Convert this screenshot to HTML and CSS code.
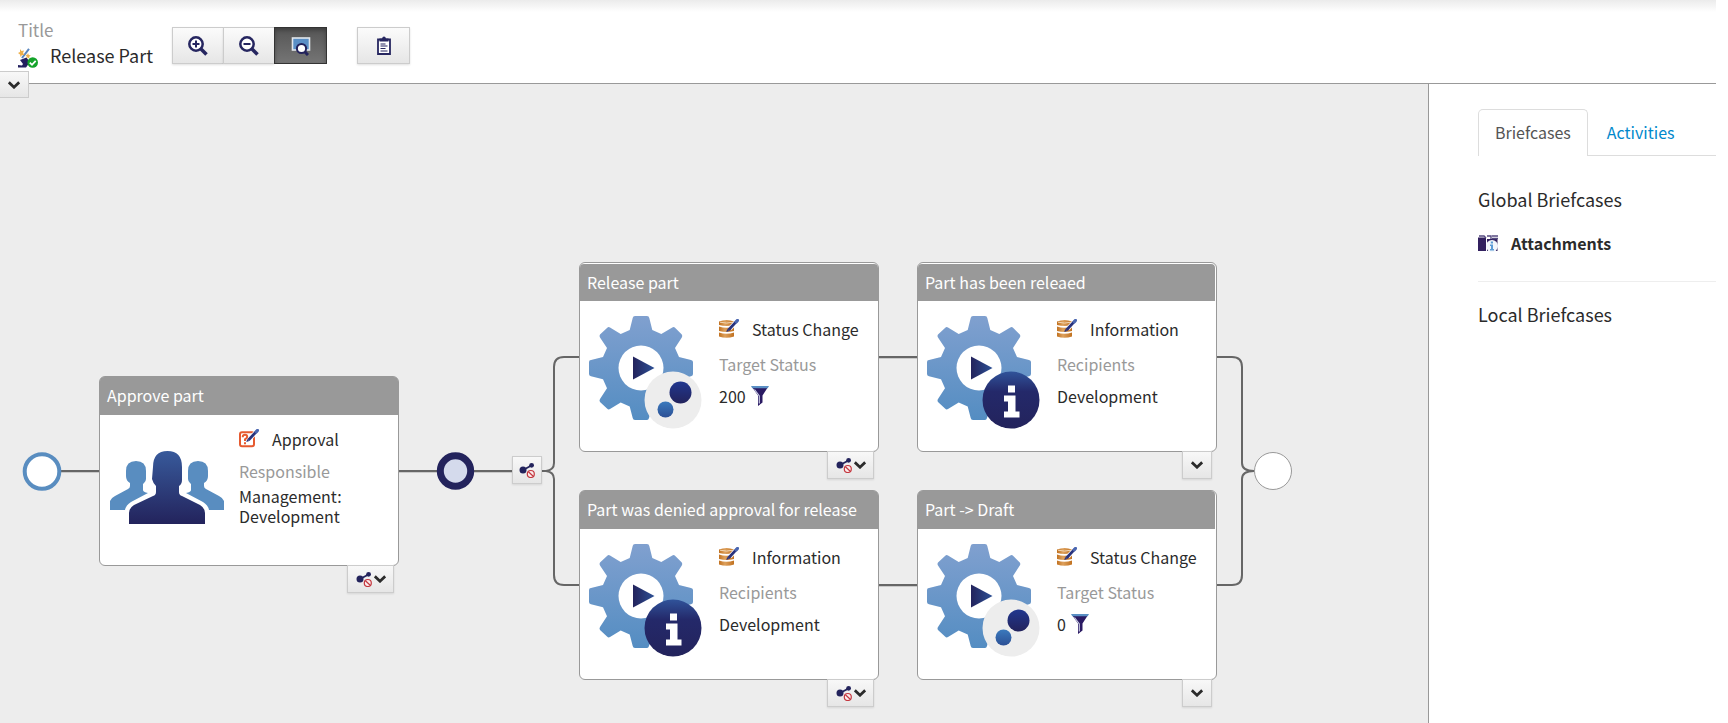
FILE: index.html
```html
<!DOCTYPE html>
<html lang="en">
<head>
<meta charset="utf-8">
<title>Release Part</title>
<link rel="stylesheet" href="styles.css">
</head>
<body>
<svg class="defs" aria-hidden="true">
  <defs>
    <linearGradient id="gear-fill" x1="0" y1="0" x2="0" y2="1"><stop offset="0" stop-color="#80a0cf"/><stop offset="1" stop-color="#548dc2"/></linearGradient>
    <linearGradient id="play-fill" x1="0" y1="0" x2="1" y2="0"><stop offset="0" stop-color="#23235c"/><stop offset="1" stop-color="#2c5095"/></linearGradient>
    <linearGradient id="navy-fill" x1="0" y1="0" x2="0" y2="1"><stop offset="0" stop-color="#30539a"/><stop offset=".35" stop-color="#24296a"/><stop offset="1" stop-color="#23235c"/></linearGradient>
    <linearGradient id="person-fill" x1="0" y1="0" x2="0" y2="1"><stop offset="0" stop-color="#385a9b"/><stop offset="1" stop-color="#23235c"/></linearGradient>
    <linearGradient id="dot-fill" x1="0" y1="0" x2="0" y2="1"><stop offset="0" stop-color="#21378f"/><stop offset="1" stop-color="#23235c"/></linearGradient>
    <linearGradient id="small-dot-fill" x1="0" y1="0" x2="0" y2="1"><stop offset="0" stop-color="#3b7abd"/><stop offset="1" stop-color="#2c5095"/></linearGradient>
    <linearGradient id="coin-fill" x1="0" y1="0" x2="1" y2="0"><stop offset="0" stop-color="#c1711f"/><stop offset=".4" stop-color="#dda05c"/><stop offset="1" stop-color="#c1711f"/></linearGradient>
    <symbol id="chevron" viewBox="0 0 12 8"><path d="M.8 1.300 6 6.200l5.200-4.900" fill="none" stroke="#2b2b2b" stroke-width="2.800"/></symbol>
    <symbol id="share" viewBox="0 0 16 16"><path d="M4 8 12.500 3.500" stroke="#23235c" stroke-width="1.800"/><circle cx="4" cy="8" r="3.500" fill="#23235c"/><circle cx="12.600" cy="3.300" r="2.400" fill="#23235c"/><circle cx="11.800" cy="12" r="3.500" fill="#fbecec" stroke="#c4373f" stroke-width="1.200"/><path d="m9.400 9.800 4.800 4.400" stroke="#c4373f" stroke-width="1.200"/></symbol>
    <symbol id="gear" viewBox="0 0 104 104"><path fill="url(#gear-fill)" d="M46 0h12q2 0 2.300 2l3 12 9 4 11-6.500q1.500-1 3 .5l6.500 6.500q1 1.500 0 3L86 32l4 9 12 3q2 .500 2 2v12q0 2-2 2.300l-12 3-4 9 7 10.700q1 1.500 0 3L86 92.500q-1.500 1.500-3 .5l-11-6.500-9 4-3 11.500q-.5 2-2 2H46q-2 0-2.300-2l-3-11.500-9-4L21 93q-1.500 1-3-.5L11 86q-1-1.500 0-3l7-10.700-4-9-12-3Q0 60 0 58V46q0-2 2-2l12-3 4-9-7-10.500q-1-1.500 0-3l7-6.500q1.500-1.500 3-.5L31.700 18l9-4 3-12Q44 0 46 0Z"/><circle cx="52" cy="52" r="22.500" fill="#fff"/><path fill="url(#play-fill)" d="M44 40.500 65.500 52 44 63.500Z"/></symbol>
    <symbol id="gear-status" viewBox="0 0 114 114"><use href="#gear" width="104" height="104"/><circle cx="84" cy="84" r="28.500" fill="#ededed"/><circle cx="91.500" cy="76.500" r="11" fill="url(#dot-fill)"/><circle cx="76.500" cy="93.500" r="8" fill="url(#small-dot-fill)"/></symbol>
    <symbol id="gear-info" viewBox="0 0 114 114"><use href="#gear" width="104" height="104"/><circle cx="84" cy="84" r="28.500" fill="url(#navy-fill)"/><path fill="#fff" d="M81 69.500h7v7h-7zM77 79.500h11.500V95.500h4v6H77v-6h4V85.500h-4z"/></symbol>
    <symbol id="database-edit" viewBox="0 0 20 20"><path fill="url(#coin-fill)" d="M0 2.500Q7.500-.5 15 2.500V6Q7.500 8 0 6Z"/><path fill="url(#coin-fill)" d="M0 7.500Q7.500 10 15 7.500V12Q7.500 14 0 12ZM0 13.500Q7.500 16 15 13.500V17.500Q7.500 20 0 17.500Z"/><path d="M1 3.200Q7.500 5 14 3.200" fill="none" stroke="#f2d7b4" stroke-width="1"/><path d="m11 9.500 7.500-8" stroke="#fff" stroke-width="4.400"/><path d="m9.500 11 8-8.600" stroke="#28327c" stroke-width="2.800"/><path d="m17.200 2.800 1.300-1.400" stroke="#4a66b0" stroke-width="3.200" stroke-linecap="round"/><path fill="#28327c" d="m7.300 13 1-3 2 2z"/></symbol>
    <symbol id="question-edit" viewBox="0 0 20 20"><rect x="1" y="3.200" width="14" height="14" rx="2" fill="#fff" stroke="#e65a30" stroke-width="2"/><path d="M3.800 8.200V7.500Q4 5.800 6 5.800q2.200 0 2.200 1.900 0 1.200-2.200 2.600v1.800M5 14.200h2" fill="none" stroke="#e65a30" stroke-width="2"/><path d="m11 9.500 7.500-8" stroke="#fff" stroke-width="4.400"/><path d="m9.500 11 8-8.600" stroke="#28327c" stroke-width="2.800"/><path d="m17.200 2.800 1.300-1.400" stroke="#4a66b0" stroke-width="3.200" stroke-linecap="round"/><path fill="#28327c" d="m7.300 13 1-3 2 2z"/></symbol>
    <symbol id="funnel" viewBox="0 0 18 20"><path fill="#2a1a63" d="M1 1h16l-5.500 8.500v7L7 20V9.500Z"/><path d="M3.500 3.500 8.300 10v7.500" fill="none" stroke="#c9cbe3" stroke-width="1.200"/><path fill="#5a8fc4" d="M0 0h18l-1.300 2.200H1.300Z"/></symbol>
    <symbol id="people" viewBox="0 0 114 74"><path id="side-person" fill="#598dc0" d="M16 20Q16 10 26 10T36 20V28Q36 30 34 32L33 33V39Q33 41 38 42L21 51Q16 54 15 59H0V50Q1 47 5 45L18 38Q20 37 20 35V32Q16 30 16 25Z"/><use href="#side-person" transform="matrix(-1 0 0 1 114 0)"/><path fill="url(#person-fill)" d="M43 16Q43 0 57.500 0T72 16V29Q72 33 69 35V41Q69 44 72 45L90 54Q95 57 95 62V73H19V62Q19 57 24 54L43 45Q46 44 46 41V35Q43 32 42 28Z"/></symbol>
  </defs>
</svg>

<div class="app">
  <header class="topbar">
    <div class="title">
      <span class="title-label">Title</span>
      <div class="title-row">
        <svg class="icon20" viewBox="0 0 20 20" aria-hidden="true"><path d="M4 10 11 .8" stroke="#5a86bd" stroke-width="2"/><path fill="#23205f" d="M2 12 8.500 9.500 11 13l-.5 3L8 19.500H0V17l4 .5 1-1.500Z"/><path d="m2 1 1.500 2L6 2.500 5 5l1.500 2L4 7 2.500 9 2 6.500 0 5l2-1Zm8 4 .8 2 2 .5-1.600 1.200.3 2L9.700 9.500l-1.500.5.5-1.800L7.500 7l1.800-.2Z" fill="#eeb04a"/><circle cx="14.700" cy="14.500" r="5.300" fill="#14a32a"/><path d="m11.800 14.600 2.200 2.200 3.700-4" fill="none" stroke="#fff" stroke-width="1.800"/></svg>
        <h1>Release Part</h1>
      </div>
    </div>
    <div class="toolbar">
      <div class="group">
        <button type="button" class="tool" aria-label="Zoom in"><svg viewBox="0 0 20 20" width="20" height="20"><circle cx="8" cy="8" r="6.700" fill="#fff" stroke="#262660" stroke-width="2.500"/><path d="M4.500 8h7M8 4.500v7" stroke="#262660" stroke-width="2"/><path d="m13 13 5.500 5.500" stroke="#262660" stroke-width="3.500"/></svg></button>
        <button type="button" class="tool" aria-label="Zoom out"><svg viewBox="0 0 20 20" width="20" height="20"><circle cx="8" cy="8" r="6.700" fill="#fff" stroke="#262660" stroke-width="2.500"/><path d="M4.500 8h7" stroke="#262660" stroke-width="2"/><path d="m13 13 5.500 5.500" stroke="#262660" stroke-width="3.500"/></svg></button>
        <button type="button" class="tool active" aria-label="Zoom to fit" aria-pressed="true"><svg viewBox="0 0 20 20" width="20" height="20"><rect x="1.500" y="2" width="17" height="12" fill="#5a8fc6" stroke="#e1e6ec" stroke-width="1.600"/><path d="m13 15 4 4" stroke="#23235c" stroke-width="3"/><circle cx="10.500" cy="12.500" r="4.600" fill="#fff" stroke="#23235c" stroke-width="2"/></svg></button>
      </div>
      <button type="button" class="tool single" aria-label="Clipboard"><svg viewBox="0 0 20 20" width="20" height="20"><path d="M4 3.500h12v14.500H4z" fill="#fff" stroke="#262660" stroke-width="1.800"/><path d="M5.500 2.500h2.500Q8.500.5 10 .5t2 2h2.500V5.500H5.500Z" fill="#262660"/><path d="M6.500 8h5M6.500 10h7M6.500 12.500h5M6.500 15h7" stroke="#262660" stroke-width="1.200"/></svg></button>
    </div>
  </header>

  <div class="workspace">
    <button type="button" class="collapse" aria-label="Expand details"><svg width="12" height="8"><use href="#chevron"/></svg></button>
    <main class="canvas">
      <svg class="links" width="1430" height="638" aria-hidden="true">
        <g fill="none" stroke="#c9c9c9" stroke-width="1"><path d="M61 388.500h38M399 388.500h113M879 274.500h38M879 502.500h38"/></g>
        <g fill="none" stroke="#666" stroke-width="2"><path d="M61 387h38M399 387h113M879 273h38M879 501h38"/>
        <path d="M542 387h4q8-1 8-8V283q0-10 10-10h15M546 387q8 1 8 8v96q0 10 10 10h15M1217 273h15q10 0 10 10v96q0 8 12 8M1217 501h15q10 0 10-10v-96q0-8 12-8"/></g>
        <circle cx="42" cy="387.500" r="17.300" fill="#fff" stroke="#598dc0" stroke-width="4"/>
        <circle cx="455.500" cy="387" r="15.200" fill="#d4daec" stroke="#23235c" stroke-width="7"/>
        <circle cx="1273" cy="387" r="18.500" fill="#fff" stroke="#999"/>
      </svg>

      <button type="button" class="menu branch" aria-label="Branch options"><svg width="16" height="16"><use href="#share"/></svg></button>

      <article class="task approve">
        <h2>Approve part</h2>
        <div class="task-body">
          <svg class="art" width="114" height="74"><use href="#people"/></svg>
          <div class="info">
            <div class="kind"><svg class="icon20"><use href="#question-edit"/></svg><span>Approval</span></div>
            <span class="label">Responsible</span>
            <p>Management: Development</p>
          </div>
        </div>
        <button type="button" class="menu" aria-label="Approve part options"><svg width="16" height="16"><use href="#share"/></svg><svg width="12" height="8"><use href="#chevron"/></svg></button>
      </article>

      <article class="task col1 row1">
        <h2>Release part</h2>
        <div class="task-body">
          <svg class="art" width="114" height="114"><use href="#gear-status"/></svg>
          <div class="info">
            <div class="kind"><svg class="icon20"><use href="#database-edit"/></svg><span>Status Change</span></div>
            <span class="label">Target Status</span>
            <p>200 <svg width="18" height="20"><use href="#funnel"/></svg></p>
          </div>
        </div>
        <button type="button" class="menu" aria-label="Release part options"><svg width="16" height="16"><use href="#share"/></svg><svg width="12" height="8"><use href="#chevron"/></svg></button>
      </article>

      <article class="task col2 row1">
        <h2>Part has been releaed</h2>
        <div class="task-body">
          <svg class="art" width="114" height="114"><use href="#gear-info"/></svg>
          <div class="info">
            <div class="kind"><svg class="icon20"><use href="#database-edit"/></svg><span>Information</span></div>
            <span class="label">Recipients</span>
            <p>Development</p>
          </div>
        </div>
        <button type="button" class="menu narrow" aria-label="Part has been releaed options"><svg width="12" height="8"><use href="#chevron"/></svg></button>
      </article>

      <article class="task col1 row2">
        <h2>Part was denied approval for release</h2>
        <div class="task-body">
          <svg class="art" width="114" height="114"><use href="#gear-info"/></svg>
          <div class="info">
            <div class="kind"><svg class="icon20"><use href="#database-edit"/></svg><span>Information</span></div>
            <span class="label">Recipients</span>
            <p>Development</p>
          </div>
        </div>
        <button type="button" class="menu" aria-label="Part was denied options"><svg width="16" height="16"><use href="#share"/></svg><svg width="12" height="8"><use href="#chevron"/></svg></button>
      </article>

      <article class="task col2 row2">
        <h2>Part -&gt; Draft</h2>
        <div class="task-body">
          <svg class="art" width="114" height="114"><use href="#gear-status"/></svg>
          <div class="info">
            <div class="kind"><svg class="icon20"><use href="#database-edit"/></svg><span>Status Change</span></div>
            <span class="label">Target Status</span>
            <p>0 <svg width="18" height="20"><use href="#funnel"/></svg></p>
          </div>
        </div>
        <button type="button" class="menu narrow" aria-label="Part Draft options"><svg width="12" height="8"><use href="#chevron"/></svg></button>
      </article>
    </main>

    <aside class="panel">
      <nav class="tabs"><a href="#briefcases" class="selected">Briefcases</a><a href="#activities">Activities</a></nav>
      <section id="briefcases">
        <h3>Global Briefcases</h3>
        <div class="attachment">
          <svg class="icon20" viewBox="0 0 20 20" aria-hidden="true"><path fill="#32205f" d="M0 4.500h8V18H0zM9 6h10.500V18H9z"/><path d="M1 3h5l2 2M9 3h4v3M14 3h6M14 5.500h6" fill="none" stroke="#554a80" stroke-width="1.400"/><path d="M8.500 5v12" stroke="#fff"/><circle cx="14" cy="13" r="6" fill="#f2f6fb"/><path fill="#5b9bd5" d="M12.800 8.500H15v2h-2.200zM12 11.500h3V16h1v1.500h-4V16h1v-3h-1z"/></svg>
          <strong>Attachments</strong>
        </div>
        <hr>
        <h3>Local Briefcases</h3>
      </section>
    </aside>
  </div>
</div>
</body>
</html>
```

FILE: styles.css
```css
* { box-sizing: border-box; }
body {
  margin: 0;
  background: #fff;
  color: #2b2b2b;
  font: 16px/20px "Noto Sans CJK SC", "Noto Sans", sans-serif;
}
h1, h2, h3, p { margin: 0; font-weight: 400; }
svg { display: block; flex: none; }
.defs { position: absolute; width: 0; height: 0; }
.icon20 { width: 20px; height: 20px; }
button { font: inherit; color: inherit; padding: 0; cursor: pointer; }

.app {
  min-height: 100vh;
  display: flex;
  flex-direction: column;
  margin-right: 12px;
  background: linear-gradient(#ebebeb, #fff 12px);
}
.topbar {
  display: flex;
  align-items: flex-start;
  gap: 19px;
  height: 83px;
  padding: 18px 18px 0;
}
.title-label { display: block; color: #999; font-size: 17px; line-height: 24px; }
.title-row { display: flex; align-items: flex-end; gap: 12px; }
.title h1 { font-size: 18px; line-height: 26px; }
.toolbar { display: flex; gap: 30px; margin-top: 9px; }
.group { display: flex; }
.tool {
  display: flex;
  align-items: center;
  justify-content: center;
  width: 51px;
  height: 37px;
  border: 1px solid #ccc;
  border-right: 0;
  background: linear-gradient(#fbfbfb, #e6e6e6);
  box-shadow: 0 1px 2px rgba(0, 0, 0, .12);
}
.tool.active {
  width: 53px;
  border: 1px solid #333;
  background: linear-gradient(#555, #757575);
  box-shadow: inset 0 2px 4px rgba(0, 0, 0, .3);
}
.tool.single { width: 53px; border-right: 1px solid #ccc; }

.workspace {
  position: relative;
  flex: 1;
  display: flex;
  border-top: 1px solid #999;
}
.collapse {
  position: absolute;
  left: 0;
  top: -13px;
  z-index: 1;
  width: 29px;
  height: 27px;
  display: flex;
  align-items: center;
  padding-left: 8px;
  border: 1px solid #ccc;
  border-left: 0;
  background: linear-gradient(#f8f8f8, #e6e6e6);
}
.canvas {
  position: relative;
  flex: 1;
  overflow: hidden;
  background: #ededed;
}
.links { position: absolute; left: 0; top: 0; }

.task {
  position: absolute;
  width: 300px;
  height: 190px;
  border: 1px solid #999;
  border-radius: 6px;
  background: #fff;
}
.approve { left: 99px; top: 292px; }
.col1 { left: 579px; }
.col2 { left: 917px; padding-right: 1px; }
.row1 { top: 178px; padding-top: 1px; }
.row2 { top: 406px; }
.task h2 {
  height: 38px;
  padding: 7px 7px 0;
  border-radius: 4px 4px 0 0;
  background: #999;
  color: #fff;
  font-size: 16px;
  line-height: 22px;
  white-space: nowrap;
}
.row1 h2 { height: 37px; }
.task-body { display: flex; padding: 15px 8px 0 9px; gap: 16px; }
.approve .art { margin-top: 21px; margin-left: 1px; }
.approve .task-body { gap: 15px; }
.info { flex: 1; }
.kind { display: flex; align-items: center; gap: 13px; height: 26px; white-space: nowrap; }
.label { display: block; margin-top: 9px; color: #999; line-height: 26px; }
.info p { display: flex; align-items: center; gap: 5px; margin-top: 6px; line-height: 26px; }
.approve .kind { height: 18px; }
.approve .label { margin-top: 10px; }
.approve .info p { margin-top: 2px; line-height: 20px; }
.menu {
  position: absolute;
  right: 4px;
  top: 188px;
  width: 47px;
  height: 28px;
  display: flex;
  align-items: center;
  justify-content: center;
  gap: 2px;
  border: 1px solid #ccc;
  background: linear-gradient(#f8f8f8, #e6e6e6);
  box-shadow: 0 1px 2px rgba(0, 0, 0, .1);
}
.narrow { width: 30px; }
.branch { left: 512px; right: auto; top: 372px; width: 30px; }

.panel {
  width: 288px;
  padding: 25px 0 0 49px;
  border-left: 1px solid #999;
  background: #fff;
}
.tabs { display: flex; border-bottom: 1px solid #ddd; }
.tabs a {
  padding: 12px 19px;
  line-height: 22px;
  color: #08c;
  text-decoration: none;
}
.tabs .selected {
  margin-bottom: -1px;
  padding: 11px 16px 12px;
  border: 1px solid #ddd;
  border-bottom: 0;
  border-radius: 5px 5px 0 0;
  background: #fff;
  color: #555;
}
.panel h3 { font-size: 18px; line-height: 26px; }
.panel section { padding-top: 30px; }
.attachment { display: flex; align-items: center; gap: 13px; margin-top: 18px; line-height: 26px; }
.panel hr { margin: 25px 0 19px; border: 0; border-top: 1px solid #eee; }
```
